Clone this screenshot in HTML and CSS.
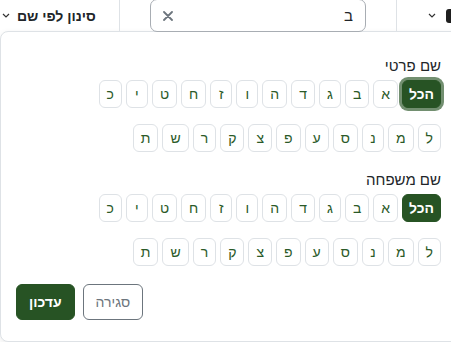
FILE: index.html
```html
<!DOCTYPE html>
<html lang="he" dir="rtl">
<head>
  <meta charset="UTF-8">
  <meta name="viewport" content="width=device-width, initial-scale=1.0">
  <title>סינון לפי שם</title>
  <link rel="stylesheet" href="styles.css">
</head>
<body>
  <div class="toolbar">
    <div class="tool tool-sort">
      <span class="sort-icon"></span>
      <svg class="chevron" width="8" height="5" viewBox="0 0 8 5"><polyline points="1,1 4,4 7,1" fill="none" stroke="#333" stroke-width="1.2"/></svg>
    </div>
    <div class="tool tool-search">
      <div class="search">
        <span class="search-text">ב</span>
        <svg class="search-clear" width="10" height="10" viewBox="0 0 10 10"><path d="M1 1 L9 9 M9 1 L1 9" stroke="#6c757d" stroke-width="1.8" stroke-linecap="round"/></svg>
      </div>
    </div>
    <div class="tool tool-filter">
      <span class="filter-label">סינון לפי שם</span>
      <svg class="chevron" width="8" height="5" viewBox="0 0 8 5"><polyline points="1,1 4,4 7,1" fill="none" stroke="#333" stroke-width="1.2"/></svg>
    </div>
  </div>

  <div class="panel">
    <div class="section">
      <div class="section-title">שם פרטי</div>
      <div class="letters" id="firstName"></div>
    </div>
    <div class="section">
      <div class="section-title">שם משפחה</div>
      <div class="letters" id="lastName"></div>
    </div>
    <div class="panel-footer">
      <button class="btn btn-close">סגירה</button>
      <button class="btn btn-update">עדכון</button>
    </div>
  </div>

  <script>
    const otiyot = ["א","ב","ג","ד","ה","ו","ז","ח","ט","י","כ","ל","מ","נ","ס","ע","פ","צ","ק","ר","ש","ת"];

    function fillLetters(id, focused) {
      const box = document.getElementById(id);
      box.innerHTML = `<button class="letter active${focused ? " focused" : ""}">הכל</button>`;
      otiyot.forEach(o => {
        box.innerHTML += `<button class="letter">${o}</button>`;
      });
    }

    fillLetters("firstName", true);
    fillLetters("lastName", false);
  </script>
</body>
</html>
```

FILE: styles.css
```css
body { margin: 0; font-family: "Liberation Sans", Arial, sans-serif; background: #fff; color: #212529; overflow: hidden; }

.toolbar { display: flex; height: 31px; }
.tool { display: flex; align-items: center; }
.tool-sort { width: 54px; border-left: 1px solid #dee2e6; gap: 10px; }
.sort-icon { width: 10px; height: 14px; background: #1f1f1f; border-radius: 3px; margin-right: -5px; }
.tool-search { width: 216px; padding: 0 30px; border-left: 1px solid #dee2e6; align-items: flex-end; }
.search { box-sizing: border-box; width: 216px; height: 33px; margin-bottom: -1px; border: 1px solid #a8adb3; border-radius: 7px; background: #fff; display: flex; align-items: center; justify-content: space-between; padding: 0 12px; font-size: 15px; position: relative; z-index: 1; }
.tool-filter { flex: 1; justify-content: flex-end; padding-left: 2px; gap: 7px; }
.filter-label { font-weight: bold; font-size: 14px; color: #212529; }

.panel { margin-right: -12px; border: 1px solid #dee2e6; border-radius: 8px; padding: 24px 21px 21px 15px; background: #fff; box-shadow: 0 2px 6px rgba(0,0,0,0.08); }
.section { margin-bottom: 18px; }
.section-title { font-size: 15px; line-height: 20px; margin-bottom: 4px; }
.letters { display: flex; flex-wrap: wrap; gap: 16px 4px; width: 352px; }
.letter { height: 28px; min-width: 22px; padding: 0 7px; border: 1px solid #dee2e6; border-radius: 6px; background: #fff; color: #2b5a28; font-family: inherit; font-size: 14px; }
.letter.active { background: #275324; border-color: #275324; color: #fff; font-weight: bold; padding: 0 6px; }
.letter.focused { box-shadow: 0 0 0 3px rgba(39,83,36,0.65); }

.panel-footer { display: flex; justify-content: flex-end; gap: 8px; }
.btn { height: 36px; padding: 0 12px; border-radius: 6px; font-family: inherit; font-size: 14px; }
.btn-close { border: 1px solid #6c757d; background: #fff; color: #6c757d; }
.btn-update { border: 1px solid #275324; background: #275324; color: #fff; font-weight: bold; }
```
